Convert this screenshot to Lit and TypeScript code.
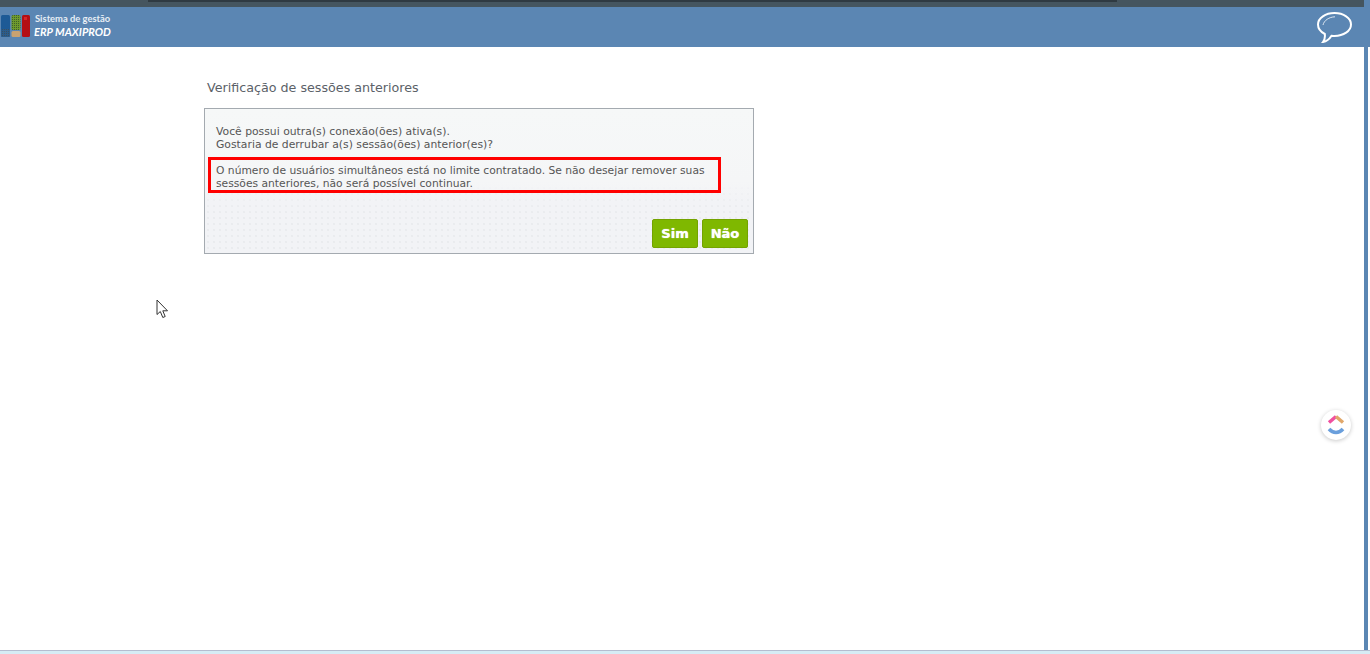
import { LitElement, html, css } from "lit";
import { customElement } from "lit/decorators.js";

@customElement("app-root")
export class AppRoot extends LitElement {
  static styles = css`
    :host { display: block; width: 1370px; height: 654px; position: relative; overflow: hidden; background: #fff; font-family: "DejaVu Sans", sans-serif; }
    .topstrip { height: 7px; background: #45555f; display: flex; }
    .topstrip .inner { flex: 1; margin: 0 247px 0 148px; height: 2px; background: #2f3a42; }
    .topstrip .end { width: 6px; background: #5b86b3; }
    .header { height: 40px; background: #5b86b3; display: flex; align-items: center; justify-content: space-between; padding-right: 18px; }
    .brand { display: flex; align-items: center; gap: 3px; }
    .logo { display: block; width: 31px; height: 22px; margin-top: -2px; }
    .brandtext { color: #fff; font-family: "Lato", "Open Sans", sans-serif; display: flex; flex-direction: column; margin-top: -3px; }
    .l1 { font-size: 9.4px; line-height: 12px; font-weight: 700; color: #e8eef5; margin-left: 1px; }
    .l2 { font-size: 11px; line-height: 13px; font-weight: 700; font-style: italic; }
    .chat { display: block; width: 35px; height: 31px; margin-top: 0; }
    .main { padding: 33px 0 0 204px; }
    h1 { margin: 0 0 12px 3px; font-size: 12.7px; line-height: 16px; font-weight: 400; color: #5b6168; }
    .card { width: 548px; height: 144px; border: 1px solid #a4aab0; display: flex; flex-direction: column; color: #555; font-size: 10.8px; line-height: 13px; background-image: linear-gradient(#f6f8f8, #f5f6f7 50%, #f2f3f6 65%); position: relative; }
    .dots { position: absolute; inset: 76px 0 0 0; background-image: radial-gradient(#e9ebee 0.7px, transparent 0.9px); background-size: 6px 6px; -webkit-mask-image: linear-gradient(transparent, #000 40%); mask-image: linear-gradient(transparent, #000 40%); }
    .msg { position: relative; padding: 16px 0 0 11px; flex: 1; }
    .msg p { margin: 0; }
    .warn { margin: 6px 0 0 -8px; width: 513px; height: 36px; box-sizing: border-box; border: 3px solid #f00; padding: 4px 0 0 5px; font-size: 10.72px; }
    .actions { position: relative; display: flex; justify-content: flex-end; gap: 4px; padding: 0 5px 5px 0; }
    button { width: 46px; height: 29px; padding: 0; background: #7fb800; border: 1px solid #74a300; border-radius: 2px; color: #fff; font: 700 13px "DejaVu Sans", sans-serif; text-shadow: 0 0 1px #fff; }
    .rail { position: absolute; left: 1364px; top: 47px; width: 4px; height: 603px; background: #5b86b3; }
    .foot { position: absolute; left: 0; right: 0; bottom: 0; height: 4px; background: #d6ecf5; border-top: 1px solid #b5bdd0; box-sizing: border-box; }
    .cursor { position: absolute; left: 156px; top: 299px; width: 13px; height: 20px; }
    .clickup { position: absolute; left: 1321px; top: 410px; width: 30px; height: 30px; border-radius: 50%; background: #fff; box-shadow: 0 1px 4px rgba(0,0,0,.22); display: flex; align-items: center; justify-content: center; }
    .clickup svg { display: block; width: 22px; height: 24px; }
  `;

  render() {
    return html`
      <div class="topstrip"><div class="inner"></div><div class="end"></div></div>
      <header class="header">
        <div class="brand">
          <svg class="logo" viewBox="0 0 31 22">
            <defs>
              <pattern id="gd" width="2" height="2" patternUnits="userSpaceOnUse"><rect width="2" height="2" fill="#6f9a2c"/><rect width="1" height="1" fill="#3d5f2a"/></pattern>
              <pattern id="bd" width="2" height="2" patternUnits="userSpaceOnUse"><rect width="2" height="2" fill="#2b5c8c"/><rect width="1" height="1" fill="#3c4f5e"/></pattern>
            </defs>
            <rect x="1" y="0" width="9" height="22" rx="1.5" fill="#1d5a96"/>
            <rect x="1" y="14" width="9" height="8" rx="1.5" fill="url(#bd)"/>
            <rect x="11.500" y="0" width="9" height="15" rx="1.5" fill="url(#gd)"/>
            <rect x="11.500" y="16" width="9" height="6" rx="1.5" fill="#c9a271"/>
            <rect x="22" y="0" width="8" height="22" rx="1.5" fill="#b40f14"/>
            <rect x="24" y="2" width="3" height="3" fill="#d8262a"/>
          </svg>
          <div class="brandtext"><span class="l1">Sistema de gestão</span><span class="l2">ERP MAXIPROD</span></div>
        </div>
        <svg class="chat" viewBox="0 0 35 31" fill="none" stroke="#fff">
          <path stroke-width="2" d="M17.500 1C26.500 1 34 6 34 12.500C34 19 26.500 24 17.500 24C16.500 24 15.500 23.900 14.500 23.800C12.500 27 9.500 29.500 6 30C7.500 28 8.200 25 7.800 22C3.800 20 1 16.500 1 12.500C1 6 8.500 1 17.500 1Z"/>
          <path stroke-width="1" stroke="#dbe5f0" d="M6 13C7 8.500 12 5 18 4.800"/>
        </svg>
      </header>
      <main class="main">
        <h1>Verificação de sessões anteriores</h1>
        <section class="card">
          <div class="dots"></div>
          <div class="msg">
            <p>Você possui outra(s) conexão(ões) ativa(s).<br>Gostaria de derrubar a(s) sessão(ões) anterior(es)?</p>
            <div class="warn">O número de usuários simultâneos está no limite contratado. Se não desejar remover suas<br>sessões anteriores, não será possível continuar.</div>
          </div>
          <div class="actions"><button>Sim</button><button>Não</button></div>
        </section>
      </main>
      <div class="rail"></div>
      <div class="foot"></div>
      <svg class="cursor" viewBox="0 0 13 20"><path d="M1 1V15.500L4.300 12.500L6.800 18.500L9.200 17.500L6.800 11.800H11.500Z" fill="#fff" stroke="#333" stroke-width="1"/></svg>
      <div class="clickup">
        <svg viewBox="0 0 22 24" fill="none" stroke-width="3.500">
          <path d="M4 9.500L11 3.500" stroke="#f0509f"/>
          <path d="M11 3.500L18 9.500" stroke="#e0a76a"/>
          <path d="M4 16C8 20.500 14 20.500 18 16" stroke="#6a9fdc"/>
        </svg>
      </div>
    `;
  }
}
